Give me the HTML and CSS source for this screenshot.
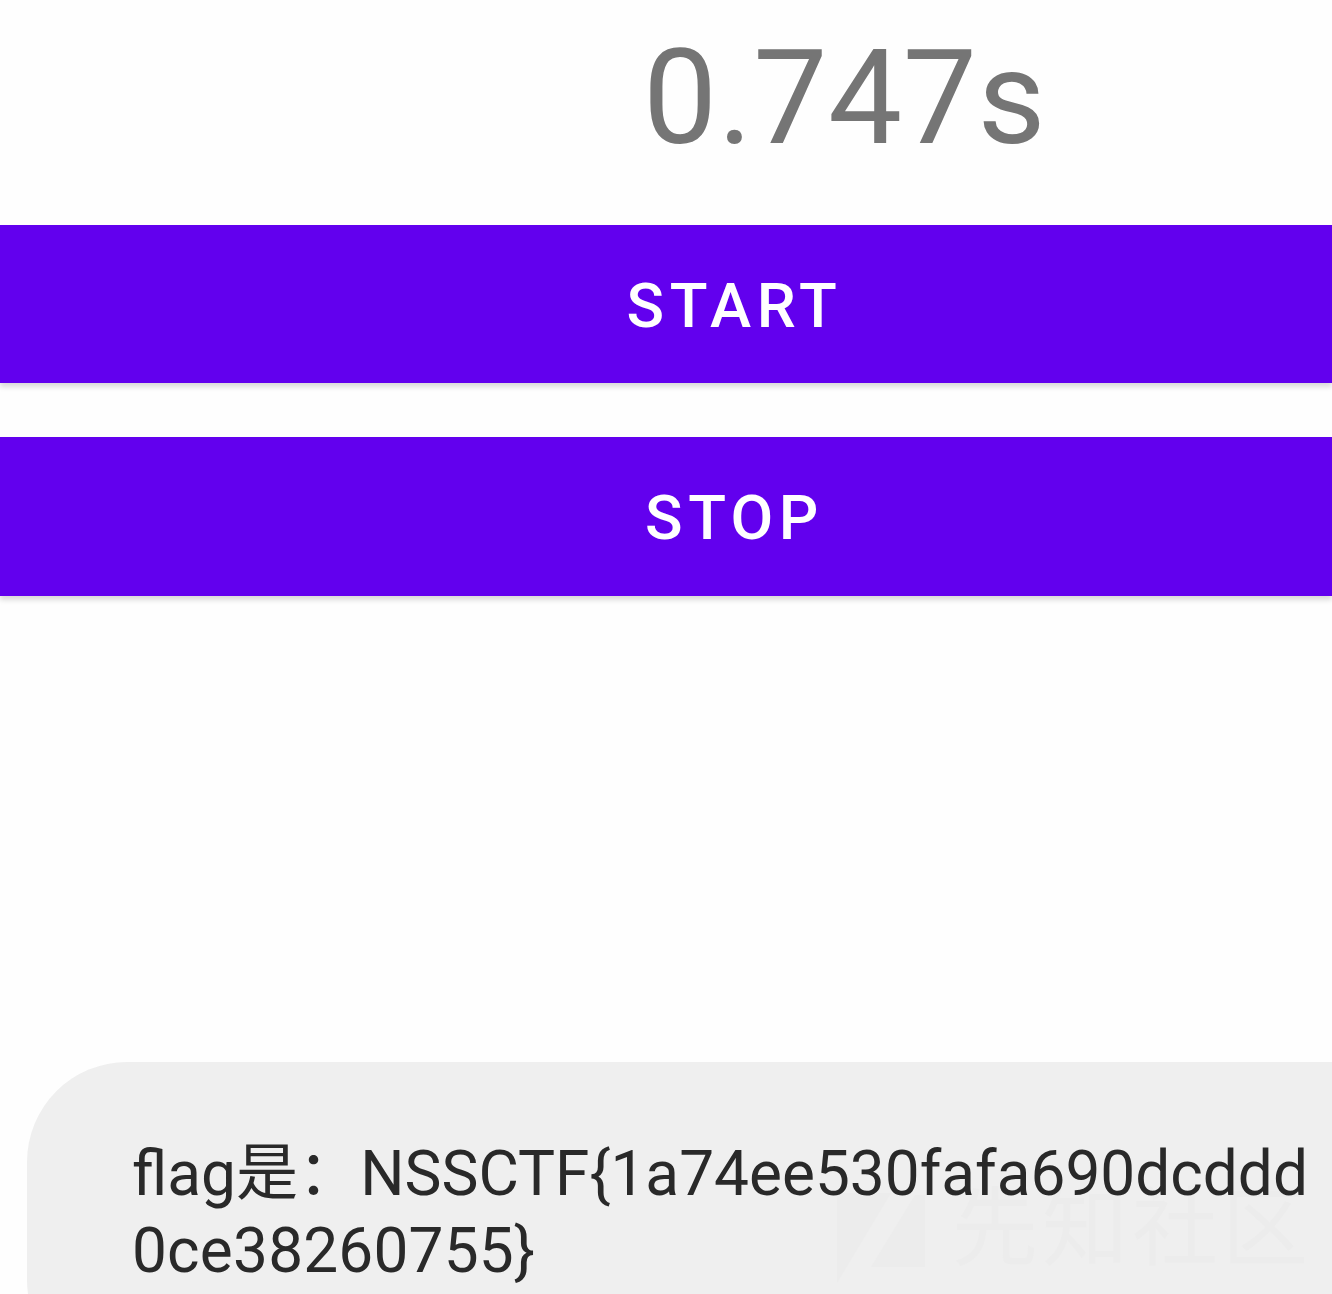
FILE: index.html
```html
<!DOCTYPE html>
<html lang="zh-CN">
<head>
<meta charset="utf-8">
<title>Stopwatch</title>
<link rel="stylesheet" href="styles.css">
</head>
<body>
<main class="screen">
  <div class="timer">0.747s</div>
  <div class="actions">
    <button class="action start">START</button>
    <button class="action stop">STOP</button>
  </div>
  <section class="toast">
    <div class="watermark">
      <svg class="mark" viewBox="0 0 88 90" aria-hidden="true"><path d="M0 0H54L0 90Z"/><path d="M88 2V74H34L78 2Z"/></svg>
      <span class="brand">先知社区</span>
    </div>
    <p class="message">flag是：NSSCTF{1a74ee530fafa690dcddd<br><span class="tail">0ce38260755}</span></p>
  </section>
</main>
</body>
</html>
```
FILE: styles.css
```css
* { box-sizing: border-box; }
body { margin: 0; background: #fefefe; font-family: Roboto, "Noto Sans CJK SC", sans-serif; }
.screen { width: 1332px; height: 1294px; overflow: hidden; display: flex; flex-direction: column; }
.timer { flex: none; height: 224.5px; padding: 20.5px 0 0 643px; font-size: 132px; line-height: 155px; letter-spacing: .6px; color: #757575; }
.actions { flex: none; display: flex; flex-direction: column; gap: 54px; }
.action { height: 158.5px; border: 0; padding: 4px 0 0 137px; background: #6200ee; color: #fff; font: 500 62px/1 Roboto, sans-serif; letter-spacing: 5.5px; box-shadow: 0 4px 5px rgba(0,0,0,.14); }
.toast { position: relative; flex: none; margin: 466.5px 0 0 27px; height: 318px; padding: 73px 0 0 105px; background: #efefef; border-radius: 100px 0 0 100px; }
.message { position: relative; margin: 0; color: #292929; font-size: 62.15px; line-height: 77px; white-space: nowrap; }
.tail { letter-spacing: .2px; }
.watermark { position: absolute; left: 810px; top: 131px; display: flex; gap: 27px; align-items: flex-start; color: #ececec; }
.mark { flex: none; width: 88px; height: 90px; fill: currentColor; }
.brand { font-size: 86px; line-height: 74px; letter-spacing: 4px; white-space: nowrap; }
```
